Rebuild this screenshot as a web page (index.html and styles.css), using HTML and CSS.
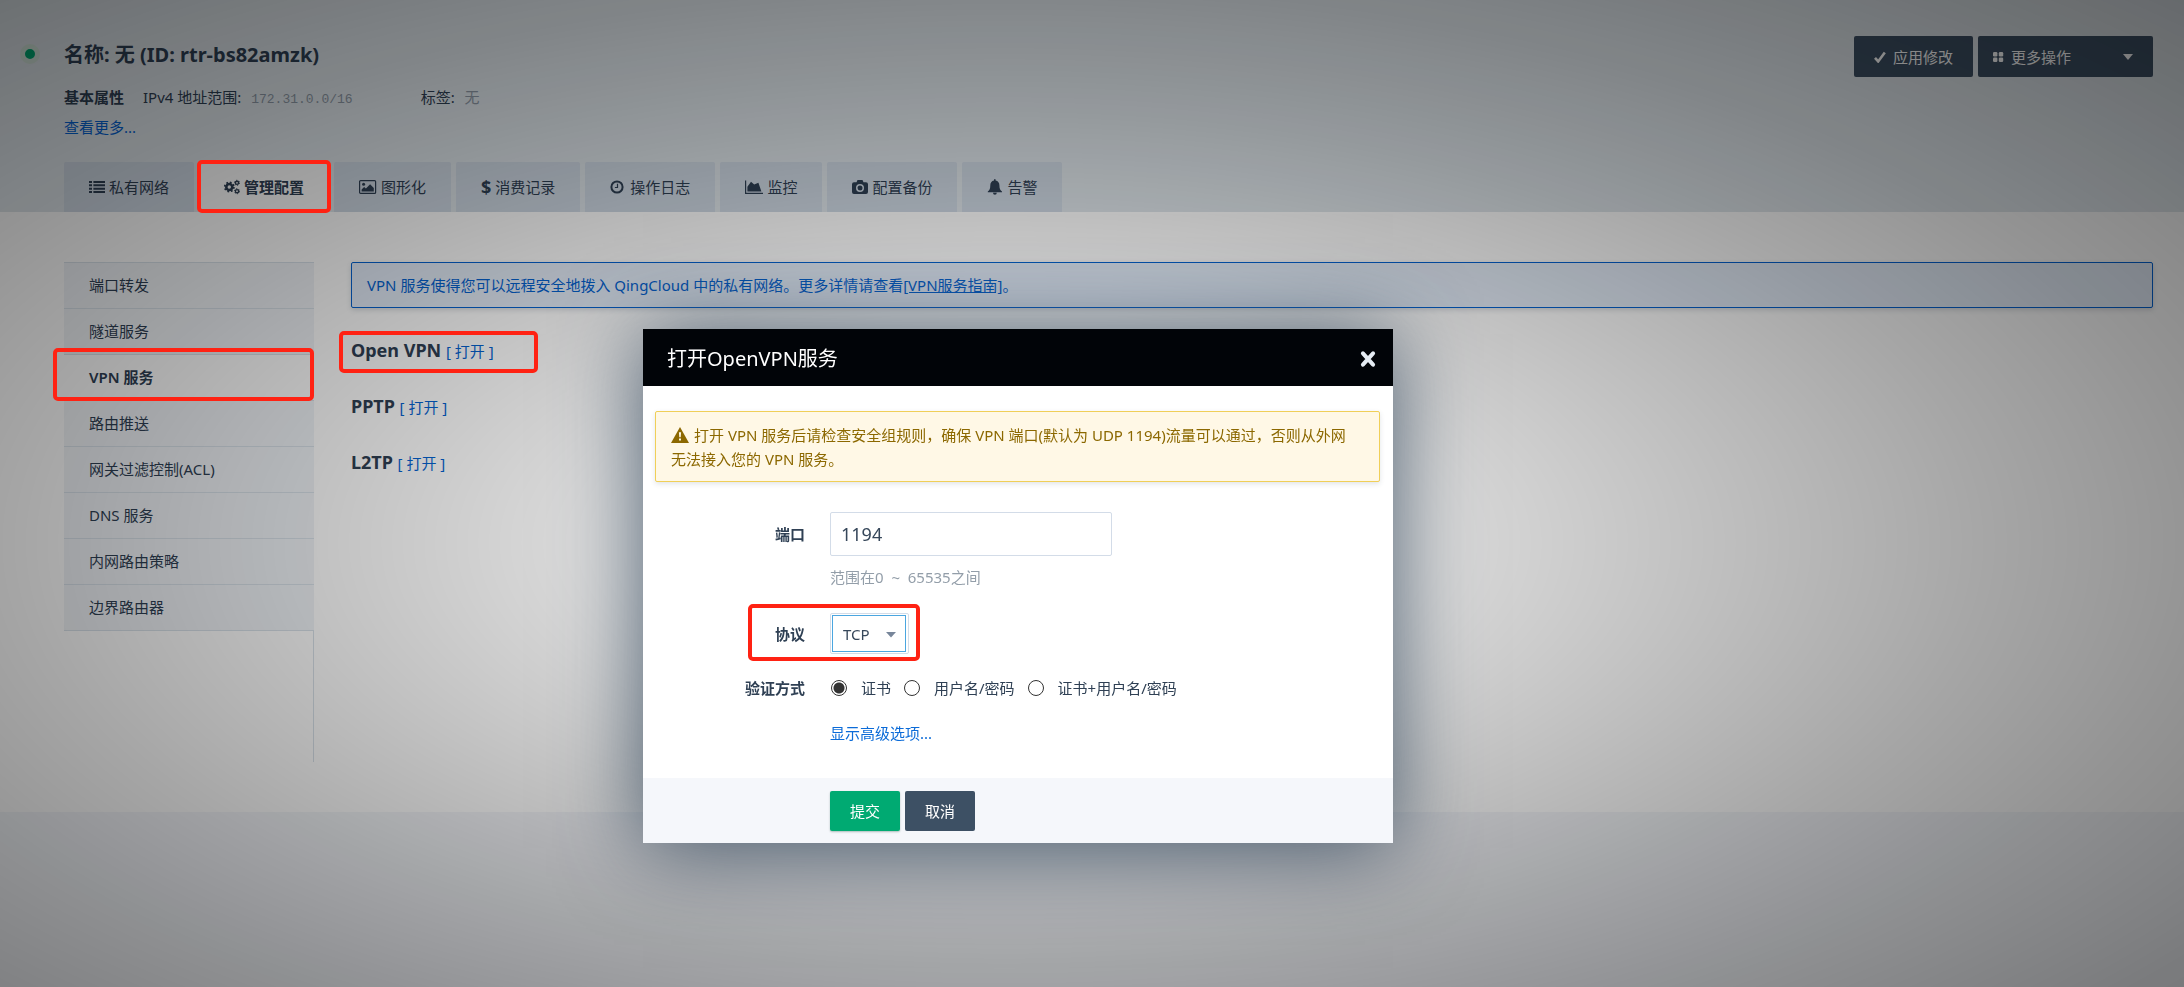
FILE: index.html
```html
<!DOCTYPE html>
<html lang="zh-CN">
<head>
<meta charset="utf-8">
<title>路由器 rtr-bs82amzk</title>
<link rel="stylesheet" href="styles.css">
</head>
<body>
<header class="page-header">
  <div class="summary">
    <span class="status-dot"></span>
    <div class="info">
      <h1 class="title">名称: 无 (ID: rtr-bs82amzk)</h1>
      <div class="attrs">
        <strong class="attrs-name">基本属性</strong>
        <span class="attr">IPv4 地址范围: <code class="mono">172.31.0.0/16</code></span>
        <span class="attr">标签: <span class="muted">无</span></span>
      </div>
      <a class="more" href="#">查看更多...</a>
    </div>
    <div class="actions">
      <button class="btn btn-dark btn-tall" type="button">
        <svg class="icon-sm" viewBox="0 0 12 12"><path d="M1 6.8 4.2 10.4 10.8 1.4" fill="none" stroke="currentColor" stroke-width="2.6"/></svg>应用修改</button>
      <button class="btn btn-dark btn-tall btn-menu" type="button">
        <svg class="icon-sm" viewBox="0 0 12 12" fill="currentColor"><rect x="1" y="1" width="4.4" height="4.4" rx="1.2"/><rect x="6.8" y="1" width="4.4" height="4.4" rx="1.2"/><rect x="1" y="6.6" width="4.4" height="4.4" rx="1.2"/><rect x="6.8" y="6.6" width="4.4" height="4.4" rx="1.2"/></svg>更多操作
        <svg class="caret" viewBox="0 0 10 6"><path d="M0 0h10L5 6z" fill="currentColor"/></svg></button>
    </div>
  </div>
  <nav class="tabs">
    <a class="tab" href="#"><svg class="icon" viewBox="0 0 16 16" fill="currentColor"><path d="M0 2h3v2H0zM4.400 2H16v2H4.400zM0 5.300h3v2H0zM4.400 5.300H16v2H4.400zM0 8.700h3v2H0zM4.400 8.700H16v2H4.400zM0 12h3v2H0zM4.400 12H16v2H4.400z"/></svg>私有网络</a>
    <a class="tab active marked" href="#"><svg class="icon" viewBox="0 0 16 16" fill="none" stroke="currentColor"><circle cx="5.3" cy="8" r="3" stroke-width="2.6"/><circle cx="5.3" cy="8" r="4.6" stroke-width="1.7" stroke-dasharray="1.8 1.81"/><circle cx="13" cy="3.8" r="1.6" stroke-width="1.4"/><circle cx="13" cy="3.8" r="2.5" stroke-width="1" stroke-dasharray="1.3 1.32"/><circle cx="13" cy="12.2" r="1.6" stroke-width="1.4"/><circle cx="13" cy="12.2" r="2.5" stroke-width="1" stroke-dasharray="1.3 1.32"/></svg>管理配置</a>
    <a class="tab" href="#"><svg class="icon-wide" viewBox="0 0 18 16"><rect x=".6" y="1.600" width="16" height="12.800" rx="1" fill="none" stroke="currentColor" stroke-width="1.200"/><circle cx="4.600" cy="5.200" r="1.500" fill="currentColor"/><path d="M2.600 12.600V10.400l2.500-2.500L6.900 9.600l4.200-4.400 3.700 3.700v3.700z" fill="currentColor"/></svg>图形化</a>
    <a class="tab" href="#"><b class="dollar">$</b>消费记录</a>
    <a class="tab" href="#"><svg class="icon" viewBox="0 0 16 16" fill="none" stroke="currentColor"><circle cx="7" cy="8" r="5.600" stroke-width="2"/><path d="M7.500 4.800v3.700H4.900" stroke-width="1.200"/></svg>操作日志</a>
    <a class="tab" href="#"><svg class="icon-wide" viewBox="0 0 18 16" fill="currentColor"><path d="M0 1.500h1.200v12.300H18V15H0zM2.400 12.600V7.800l3.600-5 3.200 2.800 4.200-1.800 3 8.800z"/></svg>监控</a>
    <a class="tab" href="#"><svg class="icon" viewBox="0 0 16 16"><path d="M2 3.200h2.500L5.500 1h5l1 2.200H14a2 2 0 0 1 2 2V13a2 2 0 0 1-2 2H2a2 2 0 0 1-2-2V5.200a2 2 0 0 1 2-2zM8 5a4 4 0 1 0 0 8 4 4 0 0 0 0-8zm0 1.500a2.500 2.500 0 1 1 0 5 2.500 2.500 0 0 1 0-5z" fill="currentColor" fill-rule="evenodd"/></svg>配置备份</a>
    <a class="tab" href="#"><svg class="icon" viewBox="0 0 16 16" fill="currentColor"><path d="M7 .2h1.600v1.300c2.500.5 3.800 2.400 3.800 4.700 0 3.600.9 5 2.600 6.300v.8H.8v-.8c1.700-1.300 2.500-2.700 2.500-6.300 0-2.300 1.200-4.200 3.700-4.700zM6 13.800h3.800a1.900 1.900 0 0 1-3.800 0z"/></svg>告警</a>
  </nav>
</header>

<main class="content">
  <nav class="sidebar">
    <a class="side-item" href="#">端口转发</a>
    <a class="side-item" href="#">隧道服务</a>
    <a class="side-item current marked" href="#">VPN 服务</a>
    <a class="side-item" href="#">路由推送</a>
    <a class="side-item" href="#">网关过滤控制(ACL)</a>
    <a class="side-item" href="#">DNS 服务</a>
    <a class="side-item" href="#">内网路由策略</a>
    <a class="side-item" href="#">边界路由器</a>
  </nav>
  <section class="services">
    <p class="notice">VPN 服务使得您可以远程安全地拨入 QingCloud 中的私有网络。更多详情请查看<a class="notice-link" href="#">[VPN服务指南]</a>。</p>
    <h2 class="service marked">Open VPN <a class="toggle" href="#">[ 打开 ]</a></h2>
    <h2 class="service">PPTP <a class="toggle" href="#">[ 打开 ]</a></h2>
    <h2 class="service">L2TP <a class="toggle" href="#">[ 打开 ]</a></h2>
  </section>
</main>

<div class="backdrop"></div>

<form class="modal" role="dialog" aria-labelledby="modal-title">
  <div class="modal-head">
    <h2 class="modal-title" id="modal-title">打开OpenVPN服务</h2>
    <button class="close" type="button" aria-label="关闭"><svg class="close-icon" viewBox="0 0 16 16"><path d="M3.500 3l9 10M12.500 3l-9 10" stroke="currentColor" stroke-width="3.600" stroke-linecap="round"/></svg></button>
  </div>
  <div class="modal-body">
    <p class="warning"><svg class="warn-icon" viewBox="0 0 18 16"><path d="M9 0l9 16H0zM7.900 5.200l.4 5h1.400l.4-5zM8 11.600v2h2v-2z" fill="currentColor" fill-rule="evenodd"/></svg>打开 VPN 服务后请检查安全组规则，确保 VPN 端口(默认为 UDP 1194)流量可以通过，否则从外网无法接入您的 VPN 服务。</p>
    <div class="row row-port">
      <label class="label" for="port">端口</label>
      <input class="port" id="port" type="text" value="1194">
    </div>
    <p class="help">范围在0 &nbsp;~&nbsp; 65535之间</p>
    <div class="row row-protocol">
      <label class="label" for="protocol">协议</label>
      <span class="select-box">
        <select class="protocol" id="protocol"><option>TCP</option><option>UDP</option></select>
        <svg class="select-arrow" viewBox="0 0 10 6"><path d="M0 0h10L5 5.500z" fill="currentColor"/></svg>
      </span>
    </div>
    <div class="row row-auth" role="radiogroup" aria-labelledby="auth-label">
      <span class="label" id="auth-label">验证方式</span>
      <div class="radios">
        <label class="radio"><input class="radio-input" type="radio" name="auth" checked>证书</label>
        <label class="radio"><input class="radio-input" type="radio" name="auth">用户名/密码</label>
        <label class="radio"><input class="radio-input" type="radio" name="auth">证书+用户名/密码</label>
      </div>
    </div>
    <a class="advanced" href="#">显示高级选项...</a>
  </div>
  <div class="modal-foot">
    <button class="btn btn-submit" type="submit">提交</button>
    <button class="btn btn-dark" type="button">取消</button>
  </div>
</form>
</body>
</html>
```

FILE: styles.css
```css
*, *::after { box-sizing: border-box; }

body {
  margin: 0;
  min-height: 100vh;
  background: #f4f6fa;
  color: #2f4054;
  font: 15px/24px "Noto Sans", "Noto Sans CJK SC", sans-serif;
}

h1, h2, p { margin: 0; }
a { color: inherit; text-decoration: none; }
button, input, select { font: inherit; }
svg { flex: none; }

.page-header { background: #dfe6eb; }

.summary {
  display: flex;
  gap: 24px;
  height: 162px;
  padding: 36px 31px 0 20px;
}

.status-dot {
  width: 20px;
  height: 20px;
  margin-top: 8px;
  border: 5px solid #d3e5da;
  border-radius: 50%;
  background: #00aa72;
}

.info { flex: 1; }

.title {
  margin-bottom: 8px;
  font-size: 20px;
  line-height: 38px;
}

.attrs { display: flex; line-height: 30px; }
.attrs-name { margin-right: 19px; }
.attr { margin-right: 68px; }

.mono {
  margin-left: 6px;
  color: #8d98a5;
  font: 13px "Liberation Mono", monospace;
}

.muted { margin-left: 6px; color: #8d98a5; }

.more { color: #0563d2; line-height: 30px; }

.actions { display: flex; gap: 5px; align-items: flex-start; }

.btn {
  display: flex;
  align-items: center;
  height: 40px;
  padding: 0 20px;
  border: 0;
  border-radius: 2px;
  color: #fff;
}

.btn-dark { background: #3d5064; }
.btn-submit { background: #00aa72; box-shadow: 0 1px 2px rgba(0, 60, 40, .3); }
.btn-tall { height: 41px; }
.btn-menu { width: 175px; padding: 0 20px 0 14px; }
.icon-sm { width: 12px; height: 12px; margin-right: 7px; }
.caret { width: 10px; height: 6px; margin-left: auto; }

.tabs { display: flex; gap: 5px; padding: 0 31px 0 64px; }

.tab {
  display: flex;
  align-items: center;
  height: 50px;
  padding: 0 25px;
  border-radius: 2px 2px 0 0;
  background: #cfd9e4;
}

.tab.active { background: #fff; font-weight: 600; }
.icon { width: 16px; height: 16px; margin-right: 4px; }
.icon-wide { width: 18px; height: 16px; margin-right: 4px; }
.dollar { margin-right: 4px; font-size: 18px; }

.content {
  display: flex;
  gap: 37px;
  padding: 50px 31px 50px 64px;
  background: #fff;
}

.sidebar {
  width: 250px;
  min-height: 500px;
  border-right: 1px solid #d9e2ea;
}

.side-item {
  display: block;
  height: 46px;
  margin-right: -1px;
  padding: 0 25px;
  border-top: 1px solid #d9e2ea;
  background: #f1f4f8;
  line-height: 45px;
}

.side-item:last-child { height: 47px; border-bottom: 1px solid #d9e2ea; }
.side-item.current { background: #fff; font-weight: 600; }

.services { flex: 1; }

.notice {
  margin-bottom: 15px;
  padding: 10px 15px;
  border: 1px solid #0563d2;
  border-radius: 2px;
  background: #e4edf9;
  box-shadow: 0 2px 5px rgba(60, 80, 100, .2);
  color: #0563d2;
}

.notice-link { text-decoration: underline; }

.service {
  width: 180px;
  height: 56px;
  font-size: 18px;
  line-height: 54px;
}

.toggle { color: #0563d2; font-size: 15px; font-weight: 400; }

/* Red callout frames stay above the dimmed backdrop */
.marked { position: relative; }

.marked::after {
  content: "";
  position: absolute;
  z-index: 20;
  border: 4px solid #ff2213;
  border-radius: 5px;
}

.tab.marked::after { inset: -2px -2px -1px; }
.side-item.marked::after { inset: -7px 0 -1px -11px; }
.service.marked::after { inset: 8px -7px 6px -12px; }

.backdrop {
  position: fixed;
  inset: 0;
  z-index: 10;
  background: radial-gradient(ellipse farthest-corner at 46% 55%, rgba(0, 0, 0, 0), rgba(0, 0, 0, .16) 28%, rgba(0, 0, 0, .35) 59%, rgba(0, 0, 0, .42) 72%, rgba(0, 0, 0, .5) 90%, rgba(0, 0, 0, .54));
}

.modal {
  position: absolute;
  z-index: 15;
  top: 329px;
  left: calc(50% - 449px);
  width: 750px;
  background: #fff;
  box-shadow: 0 5px 80px rgba(40, 62, 85, .8);
}

.modal-head {
  display: flex;
  align-items: center;
  justify-content: space-between;
  height: 57px;
  padding: 2px 16px 0 24px;
  background: #010408;
  color: #fff;
}

.modal-title { font-size: 20px; font-weight: 400; }

.close {
  display: flex;
  padding: 0;
  border: 0;
  background: none;
  color: #e6edf4;
}

.close-icon { width: 18px; height: 18px; }

.modal-body { padding: 25px 13px 33px 12px; }

.warning {
  margin-bottom: 30px;
  padding: 11px 20px 10px 15px;
  border: 1px solid #f0cf58;
  border-radius: 2px;
  background: #fff8e6;
  box-shadow: 0 2px 5px rgba(60, 80, 100, .15);
  color: #8c6800;
}

.warn-icon { width: 18px; height: 16px; margin-right: 5px; vertical-align: -2px; }

.row { display: flex; align-items: center; gap: 25px; }
.label { width: 150px; font-weight: 600; text-align: right; }

.port {
  width: 282px;
  height: 44px;
  padding: 0 10px;
  border: 1px solid #d3dce8;
  border-radius: 2px;
  color: #36475a;
  font-size: 18px;
}

.help { margin: 9px 0 24px 175px; color: #939ea9; }

.select-box {
  position: relative;
  padding: 1px 2px 1px 1px;
  border: 1px solid #d3dce8;
  border-radius: 2px;
}

.protocol {
  display: block;
  width: 74px;
  height: 37px;
  padding: 0 10px;
  border: 1px solid #4ba6e0;
  appearance: none;
  background: #fff;
  color: #36475a;
}

.select-arrow {
  position: absolute;
  top: 18px;
  right: 12px;
  width: 10px;
  height: 6px;
  color: #77869a;
  pointer-events: none;
}

.row-protocol { position: relative; }

.row-protocol::after {
  content: "";
  position: absolute;
  top: -9px;
  left: 93px;
  width: 172px;
  height: 57px;
  border: 4px solid #ff2213;
  border-radius: 5px;
}

.row-auth { margin: 22px 0 21px; }
.radios { display: flex; gap: 12px; }
.radio { display: flex; align-items: center; gap: 14px; }

.radio-input {
  width: 16px;
  height: 16px;
  margin: 0 0 0 1px;
  border: 1px solid #333;
  border-radius: 50%;
  appearance: none;
}

.radio-input:checked { background: radial-gradient(circle, #333 5px, #fff 6px); }

.advanced { display: block; margin-left: 175px; color: #0b6bd8; }

.modal-foot {
  display: flex;
  gap: 5px;
  padding: 13px 0 12px 187px;
  background: #f5f7fb;
}
```
